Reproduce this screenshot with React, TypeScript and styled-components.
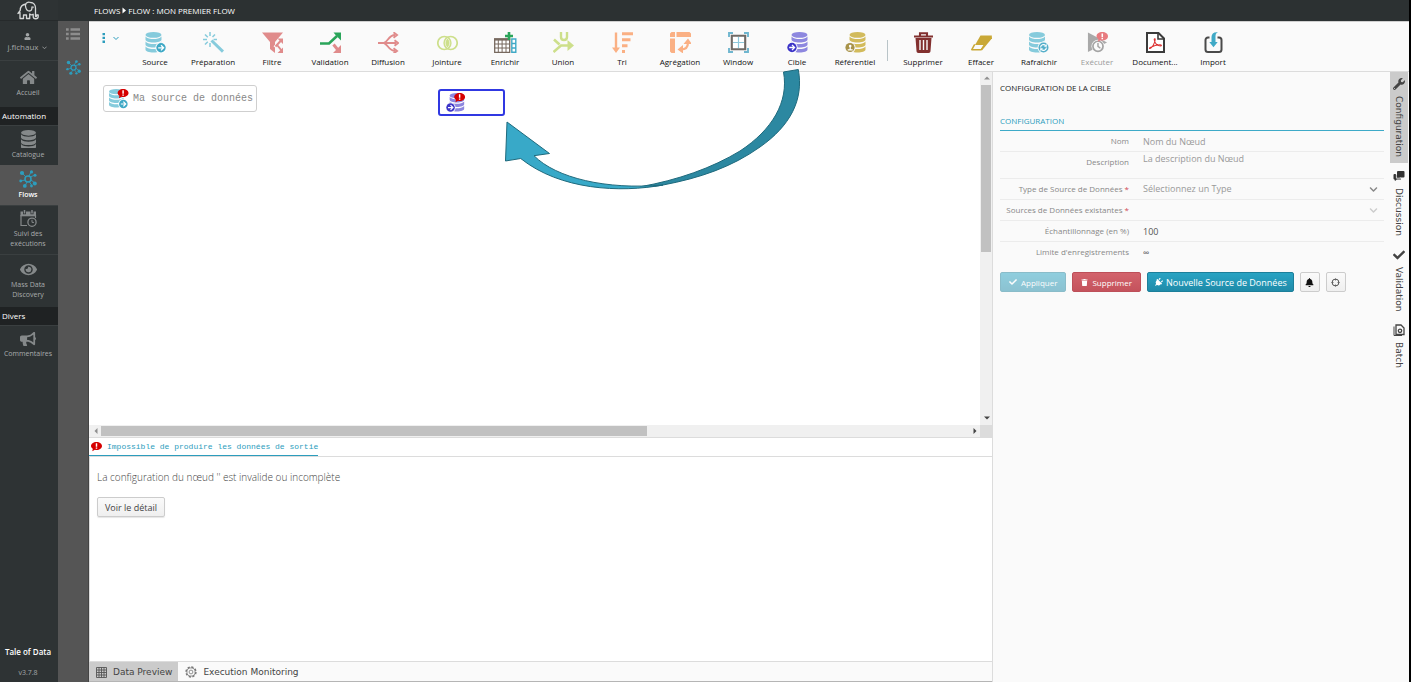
import React from "react";
import styled, { createGlobalStyle, css } from "styled-components";
import {
  FaBell,
  FaBullhorn,
  FaCheck,
  FaChevronDown,
  FaEye,
  FaHome,
  FaPlug,
  FaTrash,
  FaUser,
  FaWrench,
} from "react-icons/fa";

const sans = `"Open Sans", "Noto Sans", "Liberation Sans", sans-serif`;
const wide = `"DejaVu Sans", "Open Sans", sans-serif`;
const mono = `"Liberation Mono", "DejaVu Sans Mono", monospace`;

const GlobalStyle = createGlobalStyle`
  *, *::before, *::after { box-sizing: border-box; }
  html, body { margin: 0; padding: 0; }
  body { font-family: ${sans}; font-size: 9px; color: #333; background: #fafafa; }
  button, input, select, textarea { font-family: inherit; margin: 0; }
  svg { display: block; flex: none; }
`;

/* ---------- page frame ---------- */

const Page = styled.div`
  display: flex;
  height: 100vh;
  min-height: 560px;
  border-right: 2px solid #000;
  overflow: hidden;
`;

const Sidebar = styled.nav`
  flex: none;
  width: 58px;
  display: flex;
  flex-direction: column;
  background: #2e3334;
  color: #a3a6a7;
`;

const Logo = styled.a`
  height: 21px;
  padding-right: 2px;
  display: flex;
  justify-content: center;
  align-items: center;
  border-bottom: 1px solid #262a2b;
`;

const plainButton = css`
  border: 0;
  padding: 0;
  background: none;
  color: inherit;
  cursor: pointer;
`;

const UserButton = styled.button`
  ${plainButton}
  height: 39px;
  display: flex;
  flex-direction: column;
  align-items: center;
  justify-content: center;
  gap: 1px;
  padding-top: 5px;
  font-size: 8px;
  line-height: 12px;
  svg:first-child { margin-right: 4px; }
  span { display: flex; align-items: center; gap: 3px; }
`;

const NavItem = styled.a<{ $height: number; $active?: boolean }>`
  height: ${(p) => p.$height}px;
  padding: 0 2px 2px 0;
  display: flex;
  flex-direction: column;
  align-items: center;
  justify-content: center;
  gap: 2px;
  text-align: center;
  text-decoration: none;
  white-space: nowrap;
  font-size: 7px;
  line-height: 10px;
  color: ${(p) => (p.$active ? "#fff" : "#a9acad")};
  font-weight: ${(p) => (p.$active ? 600 : 400)};
  background: ${(p) => (p.$active ? "#555" : "transparent")};
  border-top: 1px solid ${(p) => (p.$active ? "#555" : "#3a3f40")};
  svg { color: ${(p) => (p.$active ? "#2c9dbd" : "#85898a")}; }
`;

const NavSection = styled.h2`
  margin: 0;
  padding-left: 2px;
  height: 18px;
  font-size: 8px;
  line-height: 18px;
  font-weight: 400;
  color: #fff;
  background: #1f2223;
`;

const SidebarFooter = styled.footer`
  margin-top: auto;
  display: flex;
  flex-direction: column;
  align-items: center;
  gap: 9px;
  padding: 0 2px 3px 0;
  font-size: 8px;
  line-height: 12px;
  strong { color: #fff; font-weight: 600; }
  span { font-size: 7px; }
`;

const Main = styled.div`
  flex: 1;
  min-width: 0;
  display: flex;
  flex-direction: column;
`;

const TopBar = styled.header`
  flex: none;
  height: 21px;
  padding-left: 36px;
  display: flex;
  align-items: center;
  gap: 2px;
  background: #2c3132;
  color: #fff;
  font-size: 8px;
  font-weight: 500;
`;

const Body = styled.div`
  flex: 1;
  min-height: 0;
  display: flex;
`;

const SubBar = styled.aside`
  flex: none;
  width: 31px;
  display: flex;
  flex-direction: column;
  align-items: center;
  gap: 19px;
  padding-top: 6px;
  background: #555;
  border-right: 1px solid #444;
`;

const IconButton = styled.button<{ $active?: boolean }>`
  ${plainButton}
  color: ${(p) => (p.$active ? "#2c9dbd" : "#8d8d8d")};
`;

const Content = styled.div`
  flex: 1;
  min-width: 0;
  display: flex;
  flex-direction: column;
  background: #fafafa;
`;

/* ---------- toolbar ---------- */

const Toolbar = styled.div`
  flex: none;
  height: 51px;
  display: flex;
  align-items: stretch;
  gap: 1px;
  border-top: 1px solid #cfcfcf;
  border-bottom: 1px solid #dcdcdc;
  background: #fafafa;
`;

const MenuButton = styled.button`
  ${plainButton}
  width: 36px;
  height: 31px;
  display: flex;
  align-items: center;
  gap: 7px;
  padding-left: 13px;
  color: #2c9dbd;
`;

const ToolGroup = styled.div`
  display: flex;
`;

const ToolButton = styled.button`
  ${plainButton}
  width: 58px;
  display: flex;
  flex-direction: column;
  align-items: center;
  padding-top: 10px;
  gap: 3px;
  font-size: 8px;
  line-height: 12px;
  color: #111;
  &:disabled { color: #9b9b9b; cursor: default; }
`;

const Separator = styled.div`
  width: 1px;
  height: 21px;
  margin: 18px 5px 0 2px;
  background: #b9c4c8;
`;

/* ---------- work area ---------- */

const Work = styled.div`
  flex: 1;
  min-height: 0;
  display: flex;
`;

const Left = styled.div`
  flex: 1;
  min-width: 0;
  display: grid;
  grid-template-rows: 18fr 11fr 20px;
  border-right: 1px solid #dcdcdc;
`;

const CanvasFrame = styled.section`
  min-height: 0;
  display: grid;
  grid-template-columns: 1fr 12px;
  grid-template-rows: 1fr 12px;
  background: #fff;
  border-bottom: 1px solid #dcdcdc;
`;

const Canvas = styled.div`
  position: relative;
`;

const Node = styled.div<{ $x: number; $y: number; $width: number; $selected?: boolean }>`
  position: absolute;
  left: ${(p) => p.$x}px;
  top: ${(p) => p.$y}px;
  width: ${(p) => p.$width}px;
  height: 27px;
  display: flex;
  align-items: center;
  gap: 4px;
  padding: 0 ${(p) => (p.$selected ? 6 : 5)}px;
  background: #fff;
  border: ${(p) => (p.$selected ? "2px solid #3038e2" : "1px solid #cfcfcf")};
  border-radius: 3px;
  font-family: ${mono};
  font-size: 10px;
  color: #888;
  white-space: nowrap;
`;

const Swoosh = styled.svg`
  position: absolute;
  left: 415px;
  top: -4px;
`;

const Track = styled.div<{ $vertical?: boolean }>`
  min-width: 0;
  min-height: 0;
  display: flex;
  flex-direction: ${(p) => (p.$vertical ? "column" : "row")};
  align-items: stretch;
  background: #f0f0f0;
`;

const TrackRun = styled.div<{ $vertical?: boolean }>`
  flex: 1;
  padding: ${(p) => (p.$vertical ? "0 1px" : "1px 0")};
`;

const Thumb = styled.div<{ $vertical?: boolean }>`
  width: ${(p) => (p.$vertical ? "100%" : "63%")};
  height: ${(p) => (p.$vertical ? "51%" : "100%")};
  background: #c1c1c1;
`;

const TrackArrow = styled.button<{ $dim?: boolean }>`
  ${plainButton}
  min-width: 12px;
  height: 13px;
  padding: 0 0 1px 1px;
  display: flex;
  align-items: center;
  justify-content: center;
  color: ${(p) => (p.$dim ? "#8f8f8f" : "#444")};
`;

const Corner = styled.div`
  background: #dcdcdc;
`;

const Output = styled.section`
  min-height: 0;
  display: flex;
  flex-direction: column;
  background: #fff;
`;

const OutputTabs = styled.div`
  height: 19px;
  display: flex;
  border-bottom: 1px solid #dcdcdc;
`;

const OutputTab = styled.button`
  ${plainButton}
  height: 18px;
  display: flex;
  align-items: center;
  gap: 5px;
  padding: 0 0 0 2px;
  border-bottom: 1px solid #2c9dbd;
  font-family: ${mono};
  font-size: 8px;
  color: #2c9dbd;
`;

const OutputBody = styled.div`
  flex: 1;
  display: flex;
  flex-direction: column;
  align-items: flex-start;
  gap: 12px;
  padding: 13px 7px;
  border-left: 1px solid #dcdcdc;
  border-bottom: 1px solid #dcdcdc;
  p { margin: 0; font-size: 10px; line-height: 15px; font-weight: 300; color: #444; }
`;

const raised = css`
  border: 1px solid #ccc;
  border-radius: 2px;
  background: linear-gradient(#fafafa, #efefef);
  cursor: pointer;
`;

const DetailButton = styled.button`
  ${raised}
  height: 20px;
  padding: 0 7px;
  box-shadow: 0 1px 1px rgba(0, 0, 0, 0.1);
  font-size: 9px;
  color: #444;
`;

const BottomTabs = styled.div`
  display: flex;
  border-bottom: 1px solid #b5b5b5;
`;

const BottomTab = styled.button<{ $active?: boolean }>`
  ${plainButton}
  display: flex;
  align-items: center;
  gap: 6px;
  padding: 1px 6px 0 7px;
  background: ${(p) => (p.$active ? "#cbcbcb" : "transparent")};
  font-family: ${wide};
  font-size: 9px;
  color: #444;
`;

/* ---------- configuration panel ---------- */

const Panel = styled.section`
  flex: none;
  width: 397px;
  padding: 10px 6px 0 7px;
  h1 {
    margin: 0;
    font-size: 8px;
    line-height: 12px;
    font-weight: 500;
    color: #222;
  }
  h2 {
    margin: 18px 0 0;
    height: 19px;
    font-size: 8px;
    line-height: 17px;
    font-weight: 500;
    color: #2c9dbd;
    border-bottom: 1px solid #3daac8;
  }
`;

const Field = styled.div<{ $tall?: boolean; $last?: boolean }>`
  display: grid;
  grid-template-columns: 129px 1fr;
  column-gap: 11px;
  align-items: center;
  height: ${(p) => (p.$tall ? 27 : p.$last ? 20 : 21)}px;
  border-bottom: ${(p) => (p.$last ? 0 : "1px solid #ececec")};
  label {
    text-align: right;
    font-size: 8px;
    line-height: 12px;
    color: #888;
    padding-bottom: ${(p) => (p.$tall ? 6 : 0)}px;
  }
  label b { color: #d04a55; font-weight: 400; }
`;

const control = css`
  width: 100%;
  border: 0;
  padding: 0 3px;
  background: transparent;
  outline: none;
  font-size: 9px;
  line-height: 12px;
  color: #555;
  &::placeholder { color: #999; opacity: 1; }
`;

const TextInput = styled.input`
  ${control}
  height: 18px;
`;

const TextBox = styled.textarea`
  ${control}
  display: block;
  height: 24px;
  resize: none;
`;

const SelectWrap = styled.div<{ $dim?: boolean }>`
  display: grid;
  grid-template-columns: 1fr 15px;
  align-items: center;
  color: ${(p) => (p.$dim ? "#ccc" : "#888")};
  select { grid-area: 1 / 1 / 2 / 3; }
  svg { grid-area: 1 / 2; pointer-events: none; }
`;

const SelectBox = styled.select`
  ${control}
  height: 18px;
  appearance: none;
  color: #999;
`;

const Actions = styled.div`
  display: flex;
  gap: 6px;
  margin-top: 10px;
`;

const ActionButton = styled.button<{ $tone: "primary" | "danger"; $large?: boolean }>`
  height: 20px;
  display: flex;
  align-items: center;
  gap: ${(p) => (p.$large ? 3 : 4)}px;
  padding: 0 ${(p) => (p.$large ? 6 : 8)}px;
  border: 1px solid ${(p) => (p.$tone === "danger" ? "#bd4f59" : "#1c7f9a")};
  border-radius: 2px;
  background: ${(p) =>
    p.$tone === "danger" ? "linear-gradient(#d3636c, #c4525c)" : "linear-gradient(#28a3c3, #1f8ba9)"};
  color: #fff;
  font-size: ${(p) => (p.$large ? 9 : 8)}px;
  white-space: nowrap;
  cursor: pointer;
  &:disabled { opacity: 0.5; cursor: default; }
`;

const TiltedPlug = styled(FaPlug)`
  transform: rotate(45deg);
`;

const SquareButton = styled.button`
  ${raised}
  width: 20px;
  height: 20px;
  padding: 0;
  display: flex;
  align-items: center;
  justify-content: center;
  color: #111;
`;

const Rail = styled.div`
  flex: none;
  width: 19px;
  padding-right: 1px;
  display: flex;
  flex-direction: column;
  gap: 1px;
`;

const RailTab = styled.button<{ $active?: boolean }>`
  ${plainButton}
  display: flex;
  flex-direction: column;
  align-items: center;
  gap: 6px;
  padding: 6px 0;
  background: ${(p) => (p.$active ? "#cbcbcb" : "transparent")};
  font-family: ${wide};
  font-size: 9px;
  line-height: 12px;
  color: #444;
  span { writing-mode: vertical-rl; }
`;

/* ---------- drawings ---------- */

const Discs = ({ x = 0, color }: { x?: number; color: string }) => (
  <g transform={`translate(${x} 0)`} fill={color}>
    <ellipse cx="8" cy="2.900" rx="8" ry="2.900" />
    {[0, 5, 10].map((dy) => (
      <path key={dy} d={`M0 ${4.4 + dy}c1.500 2 5 2.500 8 2.500s6.500-.5 8-2.500v3c0 1.900-3.600 3-8 3s-8-1.100-8-3z`} />
    ))}
  </g>
);

const ErrorMark = ({ x, y, color = "#d60000" }: { x: number; y: number; color?: string }) => (
  <g transform={`translate(${x} ${y})`}>
    <path d="M6 0c3.500 0 6 1.900 6 4.400S9.500 8.800 6 8.800c-.6 0-1.200 0-1.700-.2L1.400 10.200l.6-2.700C.8 6.700 0 5.600 0 4.400 0 1.900 2.500 0 6 0z" fill={color} />
    <path d="M6 1.500v3.700M6 6.100v1.400" stroke="#fff" strokeWidth="1.600" />
  </g>
);

const RoundArrow = ({ cx, cy, color }: { cx: number; cy: number; color: string }) => (
  <g transform={`translate(${cx} ${cy})`}>
    <circle r="5.600" fill="#fff" />
    <circle r="4.700" fill={color} />
    <path d="M-2.800 0H2.200M0-2.600L2.600 0 0 2.600" fill="none" stroke="#fff" strokeWidth="1.300" />
  </g>
);

const Glyph = ({ size = 21, box = 21, children }: { size?: number; box?: number; children: React.ReactNode }) => (
  <svg width={size} height={size} viewBox={`0 0 ${box} ${box}`} fill="none" aria-hidden="true">
    {children}
  </svg>
);

const SourceIcon = () => (
  <Glyph>
    <Discs x={0.5} color="#86cbdc" />
    <RoundArrow cx={16} cy={15.8} color="#3fa9c6" />
  </Glyph>
);

const PrepIcon = () => (
  <Glyph>
    <path d="M8.500 8.500L20 19.600" stroke="#86cbdc" strokeWidth="3" />
    <path d="M7 0v4M7 11v4M0 7.500h4M10.500 7.500H14M2 2.500l2.800 2.800M12 2.500L9.500 5M2 12.500l2.800-2.800" stroke="#86cbdc" strokeWidth="1.500" />
  </Glyph>
);

const FilterIcon = () => (
  <Glyph>
    <path d="M0 .5h21l-8 9.500v11l-5-4V10z" fill="#e08b8b" />
    <path d="M13 15.500L20 8M15 13l5 6" stroke="#fafafa" strokeWidth="4" />
    <path d="M13.500 14.500l5.500-6M15.500 13.500l4 5" stroke="#e08b8b" strokeWidth="2" />
    <path d="M15.500 6.500H21V12zM21 15.500V21h-5.500z" fill="#e08b8b" />
  </Glyph>
);

const ValidationIcon = () => (
  <Glyph>
    <path d="M0 11.500h9l8-7.500" stroke="#2aa55a" strokeWidth="2.600" />
    <path d="M13.500 .5H21v8l-2.500-2.500-2.500-2.500z" fill="#2aa55a" />
    <path d="M13.500 12.500l4.500 5.500" stroke="#e08b8b" strokeWidth="3" />
    <path d="M21 13v8h-8z" fill="#e08b8b" />
  </Glyph>
);

const DiffusionIcon = () => (
  <Glyph>
    <path d="M0 11h6c3.500-1 5-8 11-8M6 11h12M6 11c3.500 1 5 8 11 8" stroke="#e08b8b" strokeWidth="1.900" />
    <path d="M15.500.3L19 3l-3.500 2.700M16.500 8.300L20 11l-3.500 2.700M15.500 16.300L19 19l-3.500 2.500" stroke="#e08b8b" strokeWidth="1.900" />
  </Glyph>
);

const JoinIcon = () => (
  <Glyph>
    <path d="M10.500 5.300a6.600 6.600 0 0 1 0 11.400 6.600 6.600 0 0 1 0-11.400z" fill="#cddf8b" />
    <circle cx="7.300" cy="11" r="6.500" stroke="#cddf8b" strokeWidth="1.700" />
    <circle cx="13.700" cy="11" r="6.500" stroke="#cddf8b" strokeWidth="1.700" />
    <path d="M10.500 6.300a6 6 0 0 1 0 9.400 6 6 0 0 1 0-9.400z" stroke="#fafafa" strokeWidth=".6" />
  </Glyph>
);

const EnrichIcon = () => (
  <svg width="23" height="21" viewBox="0 0 23 21" fill="none" aria-hidden="true">
    <path d="M.7 7h15v13.300H.7z" fill="#fff" stroke="#77695f" strokeWidth="1.300" />
    <path d="M0 7.500h16" stroke="#77695f" strokeWidth="2.200" />
    <path d="M.5 12h15M.5 16h15M4.300 7v13.500M8.100 7v13.500M12 7v13.500" stroke="#77695f" />
    <path d="M17.800 7h4v13.300h-4zM17.800 11.500h4M17.800 16h4" fill="#fff" stroke="#3fa9c6" strokeWidth="1.400" />
    <path d="M15 0v8M11 4h8" stroke="#2aa55a" strokeWidth="2.600" />
  </svg>
);

const UnionIcon = () => (
  <Glyph>
    <path d="M8 0v5c0 4 6 4 6 0V0" stroke="#cddf8b" strokeWidth="2.400" />
    <path d="M1 7.500l5.500 5M.5 20l7.500-6.500h10" stroke="#cddf8b" strokeWidth="2.600" />
    <path d="M14.500 8l6.500 5.500-6.500 5.500z" fill="#cddf8b" />
  </Glyph>
);

const SortIcon = () => (
  <Glyph>
    <path d="M4 .5v17" stroke="#fab084" strokeWidth="2.400" />
    <path d="M0 15.500h8L4 21zM10 .3h11v3H10zM10 6.300h8.500v3H10zM10 12.200h5.500v3H10zM10 18h3v3h-3z" fill="#fab084" />
  </Glyph>
);

const AggregateIcon = () => (
  <Glyph>
    <path d="M0 1.500L1.500 0H5v5H0zM6.500 0h13L21 1.500V5H6.500zM0 6.500h5V21H1.500L0 19.500z" fill="#fab084" />
    <path d="M11 17.500c5 0 7-2 7-7" stroke="#fab084" strokeWidth="2.200" />
    <path d="M7.500 17.500l5.500-4.500v8.500zM18 6.500l4 5.500h-8.500z" fill="#fab084" />
  </Glyph>
);

const WindowIcon = () => (
  <Glyph>
    <path d="M1 5V1h4M16 1h4v4M20 16v4h-4M5 20H1v-4" stroke="#6fb6cf" strokeWidth="1.900" />
    <path d="M3.800 3.800h13.400v13.400H3.800z" fill="#fff" stroke="#6f6a66" strokeWidth="2.100" />
    <path d="M10.500 5v11M5 10.500h11" stroke="#8ec9dc" strokeWidth="1.200" />
  </Glyph>
);

const TargetIcon = () => (
  <Glyph>
    <Discs x={4.5} color="#8d87df" />
    <RoundArrow cx={5} cy={15.5} color="#3d35c8" />
  </Glyph>
);

const ReferenceIcon = () => (
  <Glyph>
    <Discs x={4.5} color="#d2bb5c" />
    <circle cx="5" cy="15.500" r="5.500" fill="#fafafa" />
    <circle cx="5" cy="15.500" r="4.600" fill="#a8934a" />
    <circle cx="5.200" cy="14" r="1.300" fill="#fff" />
    <path d="M2.700 17.800h5M5.200 15v3" stroke="#fff" strokeWidth="1.200" />
  </Glyph>
);

const TrashIcon = () => (
  <Glyph>
    <path d="M1 4.500h19M7 4V1.200h7V4" stroke="#82302f" strokeWidth="2.100" />
    <path d="M2.500 6h16l-1 13c0 1.200-.7 2-2 2h-10c-1.300 0-2-.8-2-2z" fill="#82302f" />
    <path d="M7 8v10M10.500 8v10M14 8v10" stroke="#fafafa" strokeWidth="1.400" />
  </Glyph>
);

const EraserIcon = () => (
  <Glyph>
    <path d="M9.500 3.500H20.800v2L14.500 13H4z" fill="#c9a836" />
    <path d="M3.700 12.300L.8 17.700h9.500l3.400-5.200" stroke="#c9a836" strokeWidth="1.500" strokeLinejoin="round" />
    <path d="M10.500 17.800L20.500 5.500" stroke="#c9a836" strokeWidth="1.600" />
  </Glyph>
);

const RefreshIcon = () => (
  <Glyph>
    <Discs color="#86cbdc" />
    <circle cx="14.500" cy="15.500" r="5.900" fill="#fafafa" />
    <circle cx="14.500" cy="15.500" r="5" fill="#55afca" />
    <path d="M11.600 15.500a2.900 2.900 0 0 1 5-2M17.400 15.500a2.900 2.900 0 0 1-5 2" stroke="#fff" strokeWidth="1.200" />
    <path d="M17.800 12v2.800H15zM11.200 19v-2.800H14z" fill="#fff" />
  </Glyph>
);

const ExecuteIcon = () => (
  <Glyph box={22}>
    <path d="M1 .5L21 11 1 21z" fill="#a9a9a9" />
    <circle cx="11.500" cy="15" r="6.800" fill="#fafafa" />
    <circle cx="11.500" cy="15" r="5.300" stroke="#a4a4a4" strokeWidth="1.800" />
    <path d="M11.500 11.500V15l2.500 2" stroke="#a4a4a4" strokeWidth="1.500" />
    <ErrorMark x={10} y={0} color="#e87b7f" />
  </Glyph>
);

const DocumentIcon = () => (
  <Glyph>
    <path d="M2 1h11.500L19 6.500V20H2z" fill="#fff" stroke="#3b3b3b" strokeWidth="2" />
    <path d="M13 1v6h6" stroke="#3b3b3b" strokeWidth="1.600" />
    <path d="M5 16.500c2-.7 5-5 5.200-9 0-1.200-1-1-1 0 .3 3.500 3 6.500 6.500 6.500 1.200-.3.800-1.200-.7-1.200-3.500 0-7 1.200-9.700 2.700-1 .7-1 1.200-.3 1z" stroke="#d33" strokeWidth="1.100" />
  </Glyph>
);

const ImportIcon = () => (
  <Glyph>
    <path d="M6.500 5.500H5a2.500 2.500 0 0 0-2.500 2.500v9.500A2.500 2.500 0 0 0 5 20h11a2.500 2.500 0 0 0 2.500-2.500V8A2.500 2.500 0 0 0 16 5.500h-1.500" stroke="#4a4a4a" strokeWidth="2" />
    <path d="M8.500 10V5c0-3.200 2.200-5.300 6.500-4.800-2 .8-2.500 2-2.500 4.300V10H14.700L10.500 15.300 6.300 10z" fill="#3fa9c6" />
  </Glyph>
);

const NetworkIcon = ({ size }: { size: number }) => (
  <Glyph size={size} box={18}>
    <circle cx="9" cy="9" r="3" stroke="currentColor" strokeWidth="1.500" />
    <path d="M7 7L3 3M11 7l4-1.500M10 6l2-4M6 10l-4 1M12 10l4 3M8 12l-2 4M10.500 12l2 3" stroke="currentColor" strokeWidth=".9" />
    <g fill="currentColor">
      <circle cx="3" cy="3" r="2.100" />
      <circle cx="12.500" cy="1.900" r="1.600" />
      <circle cx="1.700" cy="11" r="1.400" />
      <circle cx="16" cy="5.200" r="1.500" />
      <circle cx="15.800" cy="13.500" r="2" />
      <circle cx="5.800" cy="15.900" r="1.900" />
      <circle cx="12.500" cy="16" r="1.400" />
    </g>
  </Glyph>
);

const ListIcon = () => (
  <Glyph size={14} box={14}>
    <path d="M4.500 2.500H14M4.500 7H14M4.500 11.500H14" stroke="currentColor" strokeWidth="2.300" />
    <path d="M0 2.500h2.700M0 7h2.700M0 11.500h2.700" stroke="currentColor" strokeWidth="2.300" />
  </Glyph>
);

const CatalogueIcon = () => (
  <svg width="15" height="18" viewBox="0 0 16 18.400" fill="none" preserveAspectRatio="none" aria-hidden="true">
    <Discs color="currentColor" />
  </svg>
);

const CalendarClockIcon = () => (
  <Glyph size={17} box={17}>
    <path d="M1 5v10.500h6M15.500 5v3" stroke="currentColor" strokeWidth="1.200" />
    <path d="M.5 1.500h15.500v4.800H.5z" fill="currentColor" />
    <path d="M4.500 0v4.200M12 0v4.200" stroke="#2e3334" strokeWidth="3" />
    <path d="M4.500 0v3.400M12 0v3.400" stroke="currentColor" strokeWidth="1.500" />
    <circle cx="12" cy="12.200" r="4.100" stroke="currentColor" strokeWidth="1.300" />
    <path d="M12 9.800v2.600h2" stroke="currentColor" />
  </Glyph>
);

const ElephantIcon = () => (
  <svg width="22" height="19" viewBox="0 0 22 19" fill="none" stroke="#d5d7d7" strokeWidth="1.300" strokeLinejoin="round" strokeLinecap="round" aria-hidden="true">
    <path d="M9 3C5.500 3.500 3.200 6 3.200 9.500L1 12.500l2-1v6h3.500v-3.500h3v3.500h3.200V13c1 1 2.500 1 3.500.3v2.200c0 3 5 3 5 0v-1.500h-1.700v1c0 .8-1 .8-1 0V7.500C18.700 4 16.500 1.500 13.500 1.500 11 .5 8 2 8.500 5c.3 3 2 5 4 5 1.500 0 2.500-2 2.500-4" />
    <path d="M16 6v.5" />
  </svg>
);

const CaretIcon = () => (
  <svg width="4" height="7" viewBox="0 0 4 7" fill="currentColor" aria-hidden="true">
    <path d="M.5.5L4 3.500.5 6.500z" />
  </svg>
);

const ChatIcon = () => (
  <Glyph size={12} box={12}>
    <rect x="4" y="1" width="7.500" height="6.500" rx="1" fill="#333" />
    <path d="M2.500 4H1.500a1 1 0 0 0-1 1v3.500a1 1 0 0 0 1 1L2 11l1.800-1.500H8V8.500" fill="#333" />
    <path d="M3.400 3v5.200H8" stroke="#fafafa" strokeWidth=".8" />
  </Glyph>
);

const BatchIcon = () => (
  <Glyph size={12} box={12}>
    <path d="M3 1h5l3 3v6.500H3z" stroke="#444" strokeWidth="1.300" />
    <path d="M1 2.500v9h8" stroke="#444" />
    <circle cx="7" cy="6.800" r="1.700" stroke="#444" strokeWidth="1.300" />
  </Glyph>
);

const GridIcon = () => (
  <Glyph size={11} box={11}>
    <path d="M.5.5h10v10H.5zM3 .5v10M5.500.5v10M8 .5v10M.5 3h10M.5 5.500h10M.5 8h10" stroke="#555" strokeWidth=".9" />
  </Glyph>
);

const GearIcon = () => (
  <Glyph size={12} box={12}>
    <circle cx="6" cy="6" r="4.900" stroke="#777" strokeWidth="1.500" strokeDasharray="2.200 1.600" />
    <circle cx="6" cy="6" r="4.100" stroke="#777" strokeWidth=".8" />
    <circle cx="6" cy="6" r="1.900" stroke="#777" strokeWidth=".8" />
  </Glyph>
);

const RingIcon = () => (
  <Glyph size={9} box={9}>
    <circle cx="4.500" cy="4.500" r="3.400" stroke="#555" />
    <path d="M4.500.5V2.500M4.500 6.500v2M.5 4.500h2M6.500 4.500h2" stroke="#555" strokeWidth=".8" />
  </Glyph>
);

const Thin = ({ size = 6 }: { size?: number }) => (
  <Glyph size={size} box={6}>
    <path d="M.5 2L3 4.500 5.500 2" stroke="currentColor" />
  </Glyph>
);

const Triangle = ({ turn }: { turn: number }) => (
  <Glyph size={6} box={6}>
    <path d="M0 4.500h6L3 1.500z" fill="currentColor" transform={`rotate(${turn} 3 3)`} />
  </Glyph>
);

/* ---------- data ---------- */

type Tool = { label: string; icon: React.ReactNode; disabled?: boolean };

const flowTools: Tool[][] = [
  [
    { label: "Source", icon: <SourceIcon /> },
    { label: "Préparation", icon: <PrepIcon /> },
  ],
  [
    { label: "Filtre", icon: <FilterIcon /> },
    { label: "Validation", icon: <ValidationIcon /> },
    { label: "Diffusion", icon: <DiffusionIcon /> },
  ],
  [
    { label: "Jointure", icon: <JoinIcon /> },
    { label: "Enrichir", icon: <EnrichIcon /> },
    { label: "Union", icon: <UnionIcon /> },
  ],
  [
    { label: "Tri", icon: <SortIcon /> },
    { label: "Agrégation", icon: <AggregateIcon /> },
    { label: "Window", icon: <WindowIcon /> },
  ],
  [
    { label: "Cible", icon: <TargetIcon /> },
    { label: "Référentiel", icon: <ReferenceIcon /> },
  ],
];

const editTools: Tool[] = [
  { label: "Supprimer", icon: <TrashIcon /> },
  { label: "Effacer", icon: <EraserIcon /> },
  { label: "Rafraîchir", icon: <RefreshIcon /> },
  { label: "Exécuter", icon: <ExecuteIcon />, disabled: true },
  { label: "Document...", icon: <DocumentIcon /> },
  { label: "Import", icon: <ImportIcon /> },
];

const Tools = ({ items }: { items: Tool[] }) => (
  <ToolGroup>
    {items.map((t) => (
      <ToolButton key={t.label} disabled={t.disabled}>
        {t.icon}
        <span>{t.label}</span>
      </ToolButton>
    ))}
  </ToolGroup>
);

export default function App() {
  return (
    <Page>
      <GlobalStyle />
      <Sidebar>
        <Logo href="#" aria-label="Tale of Data">
          <ElephantIcon />
        </Logo>
        <UserButton>
          <FaUser size={7} />
          <span>
            j.fichaux <Thin size={5} />
          </span>
        </UserButton>
        <NavItem href="#" $height={47}>
          <FaHome size={17} />
          Accueil
        </NavItem>
        <NavSection>Automation</NavSection>
        <NavItem href="#" $height={40}>
          <CatalogueIcon />
          Catalogue
        </NavItem>
        <NavItem href="#" $height={40} $active>
          <NetworkIcon size={18} />
          Flows
        </NavItem>
        <NavItem href="#" $height={49}>
          <CalendarClockIcon />
          <span>
            Suivi des
            <br />
            exécutions
          </span>
        </NavItem>
        <NavItem href="#" $height={53}>
          <FaEye size={17} />
          <span>
            Mass Data
            <br />
            Discovery
          </span>
        </NavItem>
        <NavSection>Divers</NavSection>
        <NavItem href="#" $height={40}>
          <FaBullhorn size={16} />
          Commentaires
        </NavItem>
        <SidebarFooter>
          <strong>Tale of Data</strong>
          <span>v3.7.8</span>
        </SidebarFooter>
      </Sidebar>
      <Main>
        <TopBar>
          <span>FLOWS</span>
          <CaretIcon />
          <span>FLOW : MON PREMIER FLOW</span>
        </TopBar>
        <Body>
          <SubBar>
            <IconButton aria-label="Liste des flows">
              <ListIcon />
            </IconButton>
            <IconButton aria-label="Flow" $active>
              <NetworkIcon size={15} />
            </IconButton>
          </SubBar>
          <Content>
            <Toolbar>
              <MenuButton aria-label="Menu">
                <svg width="4" height="10" viewBox="0 0 4 10" fill="currentColor" aria-hidden="true">
                  <path d="M.5 0H3v2.300H.5zM.5 3.800H3v2.300H.5zM.5 7.600H3v2.300H.5z" />
                </svg>
                <Thin size={6} />
              </MenuButton>
              {flowTools.map((items) => (
                <Tools key={items[0].label} items={items} />
              ))}
              <Separator />
              <Tools items={editTools} />
            </Toolbar>
            <Work>
              <Left>
                <CanvasFrame>
                  <Canvas>
                    <Node $x={14} $y={13} $width={154}>
                      <Glyph size={20} box={22}>
                        <Discs color="#86cbdc" />
                        <RoundArrow cx={15.8} cy={16.5} color="#3fa9c6" />
                        <ErrorMark x={9.5} y={0} />
                      </Glyph>
                      Ma source de données
                    </Node>
                    <Node $x={349} $y={17} $width={67} $selected>
                      <Glyph size={20} box={22}>
                        <Discs x={4} color="#8d87df" />
                        <RoundArrow cx={5} cy={16} color="#3d35c8" />
                        <ErrorMark x={9} y={0} />
                      </Glyph>
                    </Node>
                    <Swoosh width="300" height="126" viewBox="504 68 300 126" aria-hidden="true">
                      <path
                        d="M783.500 72L798.300 69.500C804 100 790 126 760 147C732 167 700 178 663 185C656 186.400 648 187 640 186.800C678 180 712 168 740 151C772 130 789 102 783.500 72Z"
                        fill="#2c88a1"
                        stroke="#1f6a7d"
                      />
                      <path
                        d="M507 122L549.500 153.500L534 155.700C556 178 606 190 663 185C620 193 560 190 520.700 158.500L505.500 161Z"
                        fill="#38a9c8"
                        stroke="#1f6a7d"
                      />
                    </Swoosh>
                  </Canvas>
                  <Track $vertical>
                    <TrackArrow $dim aria-label="Défiler vers le haut">
                      <Triangle turn={0} />
                    </TrackArrow>
                    <TrackRun $vertical>
                      <Thumb $vertical />
                    </TrackRun>
                    <TrackArrow aria-label="Défiler vers le bas">
                      <Triangle turn={180} />
                    </TrackArrow>
                  </Track>
                  <Track>
                    <TrackArrow $dim aria-label="Défiler vers la gauche">
                      <Triangle turn={-90} />
                    </TrackArrow>
                    <TrackRun>
                      <Thumb />
                    </TrackRun>
                    <TrackArrow aria-label="Défiler vers la droite">
                      <Triangle turn={90} />
                    </TrackArrow>
                  </Track>
                  <Corner />
                </CanvasFrame>
                <Output>
                  <OutputTabs>
                    <OutputTab>
                      <Glyph size={11} box={12}>
                        <ErrorMark x={0} y={1} />
                      </Glyph>
                      Impossible de produire les données de sortie
                    </OutputTab>
                  </OutputTabs>
                  <OutputBody>
                    <p>La configuration du nœud '' est invalide ou incomplète</p>
                    <DetailButton>Voir le détail</DetailButton>
                  </OutputBody>
                </Output>
                <BottomTabs>
                  <BottomTab $active>
                    <GridIcon />
                    Data Preview
                  </BottomTab>
                  <BottomTab>
                    <GearIcon />
                    Execution Monitoring
                  </BottomTab>
                </BottomTabs>
              </Left>
              <Panel>
                <h1>CONFIGURATION DE LA CIBLE</h1>
                <h2>CONFIGURATION</h2>
                <Field>
                  <label htmlFor="name">Nom</label>
                  <TextInput id="name" placeholder="Nom du Nœud" />
                </Field>
                <Field $tall>
                  <label htmlFor="description">Description</label>
                  <TextBox id="description" placeholder="La description du Nœud" />
                </Field>
                <Field>
                  <label htmlFor="type">
                    Type de Source de Données <b>*</b>
                  </label>
                  <SelectWrap>
                    <SelectBox id="type">
                      <option>Sélectionnez un Type</option>
                    </SelectBox>
                    <FaChevronDown size={9} />
                  </SelectWrap>
                </Field>
                <Field>
                  <label htmlFor="existing">
                    Sources de Données existantes <b>*</b>
                  </label>
                  <SelectWrap $dim>
                    <SelectBox id="existing" disabled />
                    <FaChevronDown size={9} />
                  </SelectWrap>
                </Field>
                <Field $last={false}>
                  <label htmlFor="sampling">Échantillonnage (en %)</label>
                  <TextInput id="sampling" defaultValue="100" />
                </Field>
                <Field $last>
                  <label htmlFor="limit">Limite d'enregistrements</label>
                  <TextInput id="limit" defaultValue="∞" />
                </Field>
                <Actions>
                  <ActionButton $tone="primary" disabled>
                    <FaCheck size={8} />
                    Appliquer
                  </ActionButton>
                  <ActionButton $tone="danger">
                    <FaTrash size={7} />
                    Supprimer
                  </ActionButton>
                  <ActionButton $tone="primary" $large>
                    <TiltedPlug size={9} />
                    Nouvelle Source de Données
                  </ActionButton>
                  <SquareButton aria-label="Notifications">
                    <FaBell size={9} />
                  </SquareButton>
                  <SquareButton aria-label="État">
                    <RingIcon />
                  </SquareButton>
                </Actions>
              </Panel>
              <Rail>
                <RailTab $active>
                  <FaWrench size={12} />
                  <span>Configuration</span>
                </RailTab>
                <RailTab>
                  <ChatIcon />
                  <span>Discussion</span>
                </RailTab>
                <RailTab>
                  <FaCheck size={12} />
                  <span>Validation</span>
                </RailTab>
                <RailTab>
                  <BatchIcon />
                  <span>Batch</span>
                </RailTab>
              </Rail>
            </Work>
          </Content>
        </Body>
      </Main>
    </Page>
  );
}
